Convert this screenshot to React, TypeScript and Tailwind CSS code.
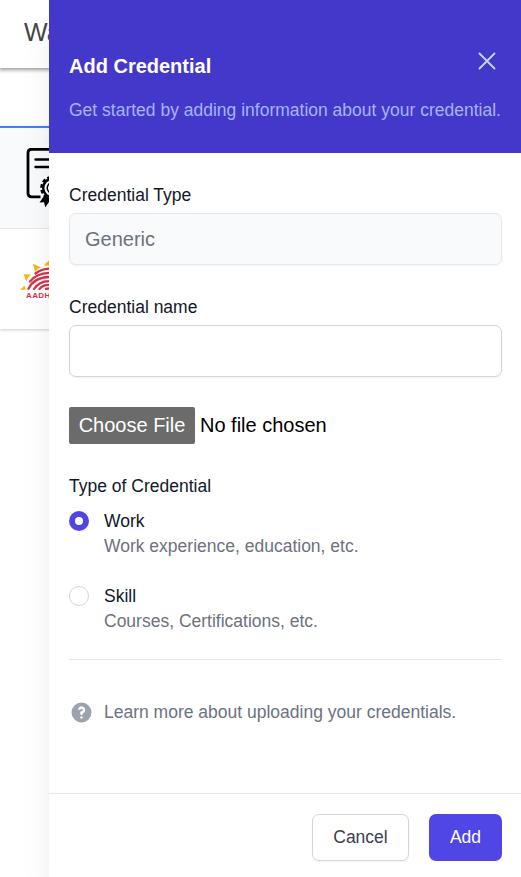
import React from 'react';

function CertificateIcon() {
  return (
    <svg className="absolute left-[26px] top-[20px]" width="60" height="62" viewBox="0 0 60 62" fill="none" stroke="#000">
      <path d="M14.500 48.800H5.500Q2 48.800 2 45.300V4.800Q2 1.300 5.500 1.300H45" strokeWidth="2.800" />
      <path d="M9.500 11.500H40M9.500 19H40" strokeWidth="2.400" strokeLinecap="round" />
      <path d="m18 48-4.500 6.500 4.500-.3 1.300 5 6.200-8.700Z" fill="#000" stroke="none" />
      <circle cx="26.500" cy="40" r="11" strokeWidth="2.600" strokeDasharray="3.600 2.160" />
      <circle cx="26.500" cy="40" r="9.300" strokeWidth="2.400" />
      <circle cx="26.500" cy="40" r="5.300" strokeWidth="1.400" />
    </svg>
  );
}

function SunLogo() {
  return (
    <div className="absolute left-[20px] top-[30px] w-[60px]">
      <svg className="block" width="60" height="31" viewBox="0 0 60 31" fill="none">
        <g fill="#f9b517">
          <path d="M0 30.800 4.500 26.500l1.300 4.300Z" />
          <path d="m3.500 15.200 7.500.3Q7.500 18.500 6.300 22.500Z" />
          <path d="m13 4.800 8 3.400q-4 1.600-6 4.600Z" />
          <path d="m23.500 6.500 6-5.500 2.500 5.500Z" />
        </g>
        <g stroke="#d4354b" strokeWidth="2.300" strokeLinecap="round">
          <path d="M15.500 14.500Q23 8.500 34 9.800" />
          <path d="M10 22.500Q18 12.500 34 14" />
          <path d="M8.500 29.800Q15 16.500 34 18.200" />
          <path d="M14 30Q20 20.500 34 22.400" />
          <path d="M19.500 30Q24 24.500 34 26.500" />
          <path d="M26 30Q28 28.800 34 30" />
        </g>
      </svg>
      <div className="ml-[6px] mt-[1px] text-[8px] leading-[9px] font-bold tracking-[.4px] text-[#d4354b]">AADHAAR</div>
    </div>
  );
}

function BackgroundPage() {
  return (
    <div className="relative h-full w-[49px] shrink-0 overflow-hidden bg-white">
      <div className="relative z-10 h-[68px] w-[120px] bg-white pl-[24px] pt-[15px] shadow-[0_1px_4px_1px_rgba(0,0,0,0.4)]">
        <span className="block text-[25px] leading-[34px] text-[#444]">Wallet</span>
      </div>
      <div className="h-[58px]" />
      <div className="w-[120px] shadow-[0_1px_3px_rgba(0,0,0,0.2)]">
        <div className="relative h-[103px] border-t-2 border-b border-t-[#3b82f6] border-b-gray-200 bg-gray-50">
          <CertificateIcon />
        </div>
        <div className="relative h-[100px] bg-white">
          <SunLogo />
        </div>
      </div>
    </div>
  );
}

function Choice({ title, note, checked }: { title: string; note: string; checked?: boolean }) {
  return (
    <div className="flex">
      <span
        className={
          checked
            ? 'mt-[2px] flex size-5 items-center justify-center rounded-full bg-[#4f46e5]'
            : 'mt-[2px] size-5 rounded-full border border-[#d1d5db] bg-white'
        }
      >
        {checked && <span className="size-[8px] rounded-full bg-white" />}
      </span>
      <div className="ml-[15px] text-[17.5px] leading-[25px]">
        <div className="text-[#111827]">{title}</div>
        <div className="text-[#6b7280]">{note}</div>
      </div>
    </div>
  );
}

export default function App() {
  return (
    <div className="flex h-[877px] w-[521px] overflow-hidden bg-white font-['Liberation_Sans',Arial,sans-serif]">
      <BackgroundPage />
      <div className="relative z-20 flex flex-1 flex-col bg-white shadow-[0_25px_31px_-6px_rgba(0,0,0,0.1),0_12px_12px_-6px_rgba(0,0,0,0.04)]">
        <header className="h-[153px] bg-[#4338ca] pr-[19px] pl-5 pt-[48px]">
          <div className="flex justify-between">
            <h2 className="pt-[1px] text-[20px] leading-[35px] font-bold text-white">Add Credential</h2>
            <svg className="-mt-[2px]" width="30" height="30" viewBox="0 0 24 24" fill="none" stroke="#c7d2fe" strokeWidth="1.500" strokeLinecap="round">
              <path d="M6 18 18 6M6 6l12 12" />
            </svg>
          </div>
          <p className="mt-[14px] text-[17.5px] leading-[25px] whitespace-nowrap text-[#a5b4fc]">
            Get started by adding information about your credential.
          </p>
        </header>
        <main className="flex-1 pr-[19px] pl-5 pt-[30px]">
          <div className="text-[17.5px] leading-[25px] text-[#111827]">Credential Type</div>
          <div className="mt-[5px] h-[52px] rounded-[7px] border border-gray-200 bg-[#f9fafb] px-[15px] text-[20px] leading-[50px] text-[#6b7280] shadow-[0_1px_2px_rgba(0,0,0,0.05)]">
            Generic
          </div>
          <div className="mt-[30px] text-[17.5px] leading-[25px] text-[#111827]">Credential name</div>
          <div className="mt-[5px] h-[52px] rounded-[7px] border border-[#d1d5db] bg-white shadow-[0_1px_2px_rgba(0,0,0,0.05)]" />
          <div className="mt-[30px] flex h-[37px] items-center text-[20px] leading-[37px] text-black">
            <span className="h-[37px] w-[126px] rounded-[2px] bg-[#6b6b6b] text-center text-white">Choose File</span>
            <span className="ml-[5px]">No file chosen</span>
          </div>
          <div className="mt-[30px] text-[17.5px] leading-[25px] text-[#111827]">Type of Credential</div>
          <div className="mt-[10px] flex flex-col gap-[25px]">
            <Choice title="Work" note="Work experience, education, etc." checked />
            <Choice title="Skill" note="Courses, Certifications, etc." />
          </div>
          <div className="mt-[25px] flex items-center border-t border-gray-200 pt-[40px]">
            <svg width="25" height="25" viewBox="0 0 20 20" fill="#9ca3af">
              <path
                fillRule="evenodd"
                clipRule="evenodd"
                d="M18 10a8 8 0 11-16 0 8 8 0 0116 0zm-8-3a1 1 0 00-.867.5 1 1 0 11-1.731-1A3 3 0 0113 8a3.001 3.001 0 01-2 2.830V11a1 1 0 11-2 0v-1a1 1 0 011-1 1 1 0 100-2zm0 8a1 1 0 100-2 1 1 0 000 2z"
              />
            </svg>
            <span className="ml-[10px] text-[17.5px] leading-[25px] text-[#6b7280]">
              Learn more about uploading your credentials.
            </span>
          </div>
        </main>
        <footer className="flex h-[84px] justify-end gap-5 border-t border-gray-200 pt-5 pr-[19px] text-[17.5px] leading-[45px]">
          <div className="h-[47px] w-[97px] rounded-[7px] border border-[#d1d5db] bg-white text-center text-[#374151] shadow-[0_1px_2px_rgba(0,0,0,0.05)]">
            Cancel
          </div>
          <div className="h-[47px] w-[73px] rounded-[7px] border border-transparent bg-[#4f46e5] text-center text-white">
            Add
          </div>
        </footer>
      </div>
    </div>
  );
}
